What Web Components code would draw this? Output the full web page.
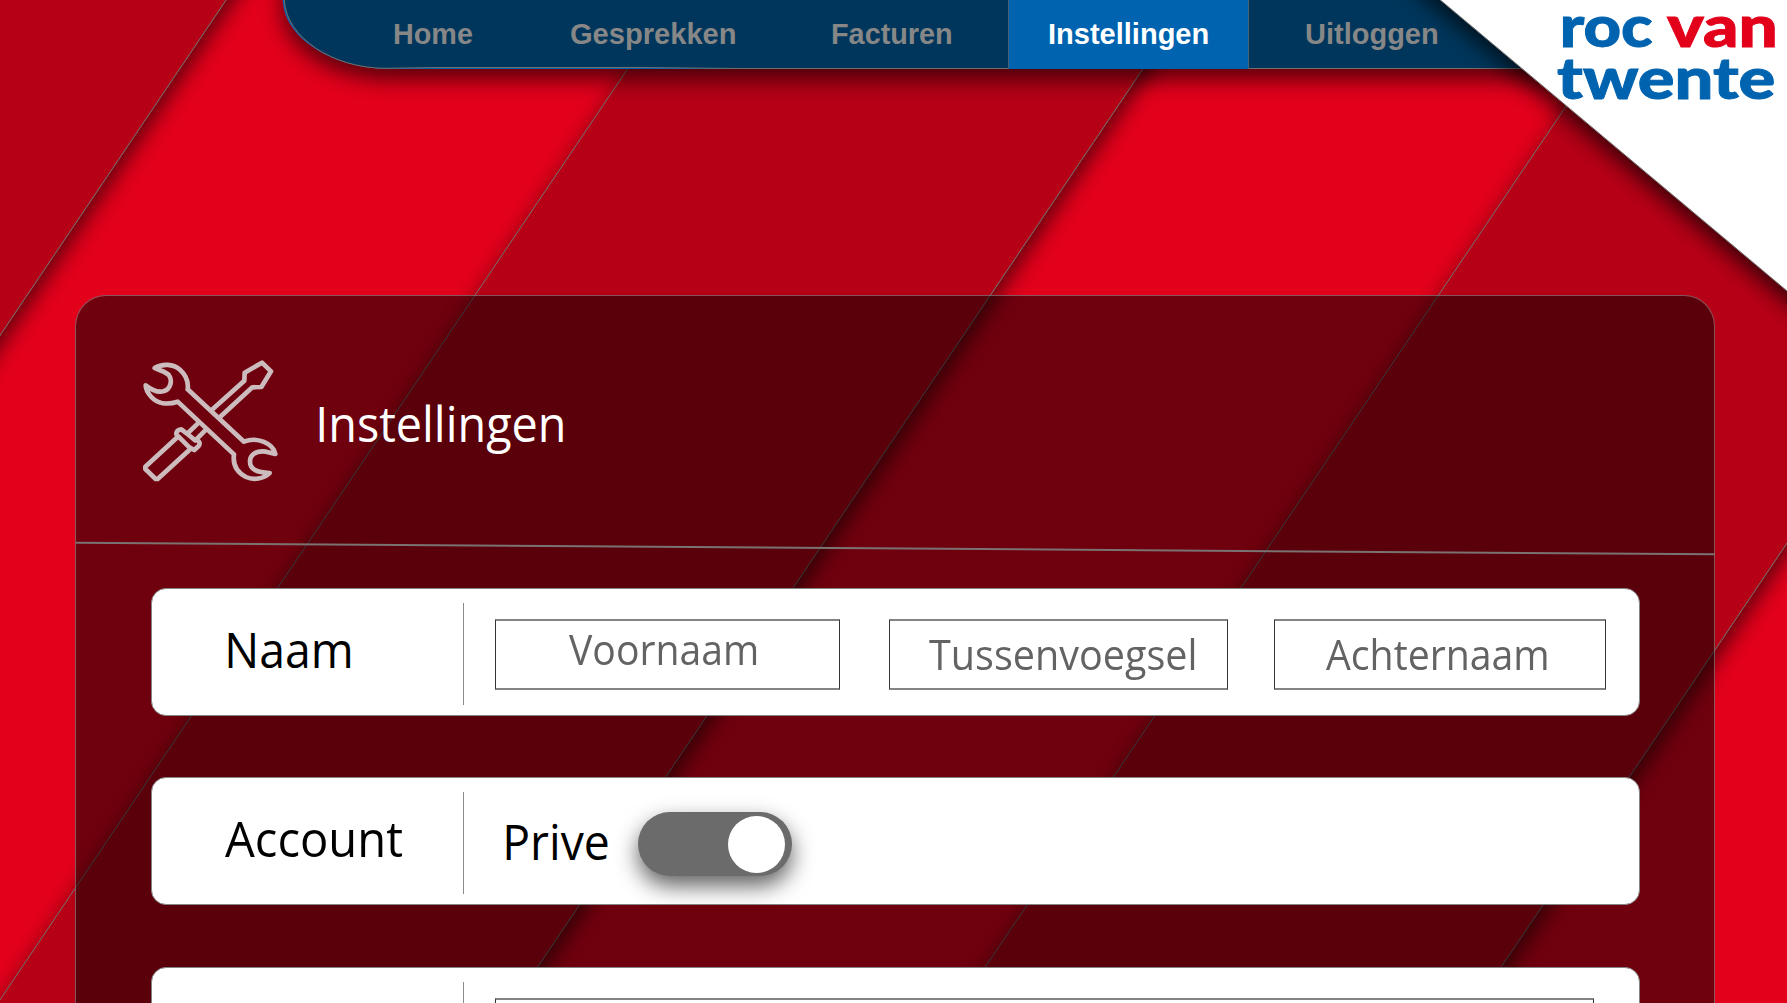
<!DOCTYPE html>
<html lang="nl">
<head>
<meta charset="utf-8">
<title>Instellingen</title>
<style>
  html, body { margin: 0; height: 100%; overflow: hidden; }
  body { font-family: "Open Sans", "Noto Sans", sans-serif; background: #e3001b; }
</style>
</head>
<body>
<settings-page></settings-page>
<script>
const define = (name, html, setup) => {
  const template = document.createElement('template');
  template.innerHTML = html;
  customElements.define(name, class extends HTMLElement {
    connectedCallback() {
      if (this.shadowRoot) return;
      const root = this.attachShadow({ mode: 'open' });
      root.append(template.content.cloneNode(true));
      if (setup) setup(this, root);
    }
  });
};

// Text whose inked width is set by the "w" attribute.
define('fit-text', `
  <style>
    :host { display: block; flex: none; white-space: nowrap; }
    span { display: inline-block; transform-origin: 0 0; }
  </style><span></span>`, (host, root) => {
  const span = root.querySelector('span');
  span.textContent = host.getAttribute('text');
  const cs = getComputedStyle(host);
  const ctx = document.createElement('canvas').getContext('2d');
  ctx.font = `${cs.fontWeight} ${cs.fontSize} ${cs.fontFamily}`;
  const m = ctx.measureText(span.textContent);
  const w = +host.getAttribute('w');
  const s = w / (m.actualBoundingBoxLeft + m.actualBoundingBoxRight);
  host.style.width = w + 'px';
  span.style.transform = `translateX(${m.actualBoundingBoxLeft * s}px) scaleX(${s})`;
});

define('striped-backdrop', `
  <style>
    :host { display: block; position: absolute; inset: 0; }
    svg { display: block; }
  </style>
  <svg width="1787" height="1003" viewBox="0 0 1787 1003">
    <defs>
      <filter id="s" filterUnits="userSpaceOnUse" x="-400" y="-200" width="2700" height="1500">
        <feDropShadow dx="0" dy="10" stdDeviation="11" flood-color="#000" flood-opacity=".62"/>
      </filter>
    </defs>
    <rect width="1787" height="1003" fill="#e3001b"/>
    <g fill="#b60014" stroke="#707070" stroke-width="1">
      <path filter="url(#s)" d="M-200 -100H293.5L-111 500H-400Z"/>
      <path filter="url(#s)" d="M741.5 -100H1256.7L448 1100H-67.5Z"/>
      <path filter="url(#s)" d="M1705.2 -100H2220.5L1411.5 1100H895.5Z"/>
    </g>
  </svg>`);

define('nav-tab', `
  <style>
    :host { display: flex; justify-content: center; height: 69px; line-height: 68px; color: #878787; box-sizing: border-box; }
    :host([active]) { background: #0063af; color: #fff; border: solid #4a6275; border-width: 0 1px; }
  </style><slot></slot>`);

define('main-nav', `
  <style>
    :host { display: block; position: relative; height: 69px; font: bold 29px "Liberation Sans", Arial, sans-serif; }
    svg { position: absolute; inset: 0; overflow: visible; }
    nav { position: relative; display: grid; grid-template-columns: 192.4px 246.2px 232.4px 241px 246px; padding-left: 337px; }
  </style>
  <svg width="1787" height="69">
    <defs>
      <filter id="n" filterUnits="userSpaceOnUse" x="200" y="-150" width="1600" height="320">
        <feDropShadow dx="0" dy="10" stdDeviation="11" flood-color="#000" flood-opacity=".62"/>
      </filter>
    </defs>
    <path filter="url(#n)" fill="#0063af" d="M282.8 -60V0C284 38 332 69 392 69H1700V-60Z"/>
    <path fill="#00365b" stroke="#707070" d="M284.3 -60V0C286 38 334 68.3 385 68.3L440 67.5H640L740 68.5H1700V-60Z"/>
  </svg>
  <nav>
    <nav-tab><fit-text w="78.8" text="Home"></fit-text></nav-tab>
    <nav-tab><fit-text w="163.8" text="Gesprekken"></fit-text></nav-tab>
    <nav-tab><fit-text w="119" text="Facturen"></fit-text></nav-tab>
    <nav-tab active><fit-text w="158.5" text="Instellingen"></fit-text></nav-tab>
    <nav-tab><fit-text w="131" text="Uitloggen"></fit-text></nav-tab>
  </nav>`);

define('corner-logo', `
  <style>
    :host { display: block; position: absolute; top: 0; right: 0; width: 347px; height: 292px; }
    svg { position: absolute; inset: 0; overflow: visible; }
    .logo { position: relative; padding: 0 12px 0 117px; font: 900 58px/49px Lato, sans-serif; color: #0063af; -webkit-text-stroke: .9px currentColor; }
    .row { display: flex; justify-content: space-between; height: 49px; }
    .first { padding: 0 1px 3px 6px; }
    .red { color: #e3001b; }
  </style>
  <svg width="347" height="292">
    <defs>
      <filter id="c" filterUnits="userSpaceOnUse" x="-100" y="-150" width="600" height="600">
        <feDropShadow dx="0" dy="10" stdDeviation="11" flood-color="#000" flood-opacity=".7"/>
      </filter>
    </defs>
    <path filter="url(#c)" fill="#fff" stroke="#707070" d="M-118.8 -100L440 369V-100Z"/>
  </svg>
  <div class="logo">
    <div class="row first"><fit-text w="89.5" text="roc"></fit-text><fit-text class="red" w="107.5" text="van"></fit-text></div>
    <div class="row"><fit-text w="217" text="twente"></fit-text></div>
  </div>`);

define('tools-icon', `
  <style>:host { display: block; flex: none; width: 140px; height: 126px; } svg { display: block; }</style>
  <svg width="140" height="126" viewBox="60 50 420 378" fill="none" stroke="#cdbcbe" stroke-width="14" stroke-linejoin="round" stroke-linecap="round">
    <path d="M104 83C126 69 160 70 180 88C200 106 206 124 203 147L372 304C412 288 460 310 466 341L438 334C408 330 390 342 390 364C390 388 412 396 449 398C432 416 400 420 378 410C350 396 338 372 342 342L173 184C142 194 112 190 94 170C82 157 77 145 77 135C96 150 112 157 130 153C152 147 158 120 147 105C138 94 122 92 104 83Z"/>
    <path d="M276 208L373 121L374 97L426 67L453 93L424 140L397 141L301 229"/>
    <path d="M237 246L205 277M258 268L226 300"/>
    <path d="M175 288C163 280 171 268 184 267L206 284L224 299C238 299 242 308 236 317L223 329L208 321Z"/>
    <path d="M172 291L76 379V386L107 416H113L212 325"/>
  </svg>`);

define('panel-header', `
  <style>
    :host { display: flex; position: relative; height: 292px; color: #fff; font-size: 49px; line-height: 60px; }
    tools-icon { margin: 61px 0 0 64px; }
    fit-text { margin: 97px 0 0 39px; }
    svg { position: absolute; left: 0; top: 240px; }
  </style>
  <tools-icon></tools-icon>
  <fit-text w="244.5" text="Instellingen"></fit-text>
  <svg width="1639" height="28"><path d="M-1 6.7L1640 18.3" stroke="#7b7272" stroke-width="2"/></svg>`);

define('setting-card', `
  <style>
    :host { display: flex; box-sizing: border-box; height: 128px; border: 1px solid #858585; border-radius: 15px; background: #fff; color: #000; font-size: 49px; line-height: 60px; }
    .label { box-sizing: border-box; width: 312px; height: 102px; margin-top: 14px; padding: 16px 0 0 var(--inset, 76px); border-right: 1px solid #8c8c8c; }
    .fields { display: flex; flex: 1; }
  </style>
  <div class="label"><slot name="label"></slot></div>
  <div class="fields"><slot></slot></div>`);

define('text-field', `
  <style>
    :host { display: block; flex: none; box-sizing: border-box; height: 71px; margin-top: 30px; border: solid #333; border-width: 2px 1px; border-top-color: #848484; border-bottom-color: #848484; color: #636363; font-size: 42px; line-height: 60px; }
  </style><slot></slot>`);

define('toggle-switch', `
  <style>
    :host { display: flex; justify-content: flex-end; flex: none; box-sizing: border-box; width: 153.5px; height: 64px; padding: 4px 7px 0 0; border-radius: 32px; background: #6b6b6b; box-shadow: 0 10px 22px rgba(0,0,0,.62); }
    i { display: block; width: 57px; height: 57px; border-radius: 50%; background: #fff; }
  </style><i></i>`);

define('settings-panel', `
  <style>
    :host { display: block; box-sizing: border-box; width: 1640px; height: 900px; margin: 226px 0 0 75px; border: 1px solid rgba(112,112,112,.75); border-radius: 31px; background: rgba(0,0,0,.51); background-clip: padding-box; }
    .list { display: flex; flex-direction: column; padding: 0 74px 0 75px; }
    .list > * + * { margin-top: 61px; }
    .list > .last { margin-top: 62px; }
  </style>
  <panel-header></panel-header>
  <div class="list">
    <setting-card>
      <fit-text slot="label" w="122.5" text="Naam"></fit-text>
      <text-field style="width:345px;margin-left:31px"><fit-text style="margin:-2px 0 0 72.5px" w="187.5" text="Voornaam"></fit-text></text-field>
      <text-field style="width:339px;margin-left:49px"><fit-text style="margin:3px 0 0 39px" w="266" text="Tussenvoegsel"></fit-text></text-field>
      <text-field style="width:332px;margin-left:46px"><fit-text style="margin:3px 0 0 51px" w="221" text="Achternaam"></fit-text></text-field>
    </setting-card>
    <setting-card style="--inset:73px">
      <fit-text slot="label" w="177.5" text="Account"></fit-text>
      <fit-text style="margin:33px 0 0 42px" w="101.5" text="Prive"></fit-text>
      <toggle-switch style="margin:34px 0 0 30.5px"></toggle-switch>
    </setting-card>
    <setting-card class="last">
      <text-field style="width:1099px;margin-left:31px"></text-field>
    </setting-card>
  </div>`);

define('settings-page', `
  <style>
    :host { display: block; position: relative; width: 1787px; height: 1003px; overflow: hidden; }
    .content { position: relative; display: flex; flex-direction: column; }
  </style>
  <striped-backdrop></striped-backdrop>
  <div class="content"><main-nav></main-nav><settings-panel></settings-panel></div>
  <corner-logo></corner-logo>`);
</script>
</body>
</html>
